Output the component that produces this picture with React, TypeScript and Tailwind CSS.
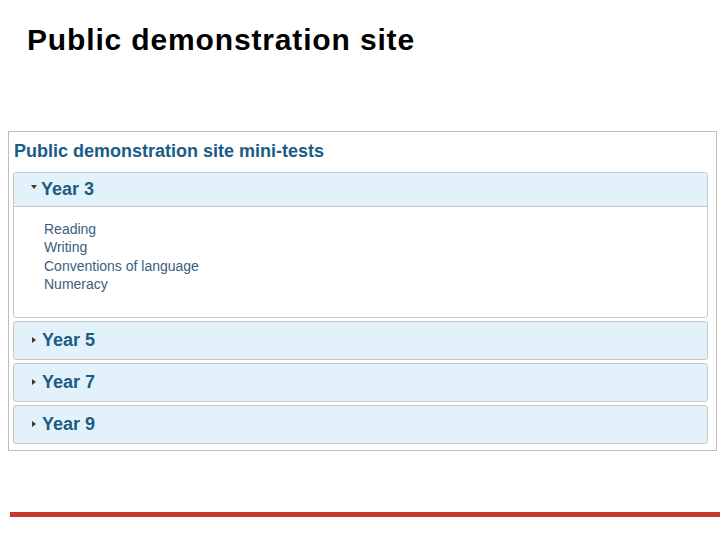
export default function App() {
  const closed = ["Year 5", "Year 7", "Year 9"];
  const tests = ["Reading", "Writing", "Conventions of language", "Numeracy"];

  return (
    <div className="w-[720px] h-[540px] bg-white relative overflow-hidden font-['Liberation_Sans',Arial,sans-serif]">
      <h1 className="pl-[27px] pt-[23px] text-[30px] leading-[34px] font-bold text-black tracking-[0.85px]">
        Public demonstration site
      </h1>

      <div className="ml-[8px] mt-[74px] w-[709px] h-[320px] border border-[#bdbdbd] pt-[9px] pl-[4px] pr-[8px]">
        <h2 className="pl-[1px] text-[18px] leading-[20px] font-bold text-[#1b5c86]">
          Public demonstration site mini-tests
        </h2>

        <div className="mt-[11px] flex flex-col gap-[3px]">
          <div className="rounded-[3px] border border-[#c8c8c8]">
            <div className="h-[34px] bg-[#e3f2fa] border-b border-[#c8c8c8] rounded-t-[3px] flex items-center pl-[17px]">
              <span className="w-0 h-0 border-l-[3.5px] border-r-[3.5px] border-t-[4px] border-l-transparent border-r-transparent border-t-[#3a3a3a] mr-[4px] -mt-[6px]" />
              <span className="text-[18px] font-bold text-[#1b5c86]">Year 3</span>
            </div>
            <ul className="h-[110px] pl-[30px] pt-[13px] text-[14px] leading-[18.3px] text-[#3b5e7e]">
              {tests.map((t) => (
                <li key={t}>{t}</li>
              ))}
            </ul>
          </div>

          {closed.map((y) => (
            <div
              key={y}
              className="h-[39px] rounded-[3px] border border-[#c8c8c8] bg-[#e3f2fa] flex items-center pl-[18px]"
            >
              <span className="w-0 h-0 border-t-[3.5px] border-b-[3.5px] border-l-[4px] border-t-transparent border-b-transparent border-l-[#3a3a3a] mr-[6px] -mt-[2px]" />
              <span className="text-[18px] font-bold text-[#1b5c86]">{y}</span>
            </div>
          ))}
        </div>
      </div>

      <div className="ml-[10px] mt-[61px] h-[5px] bg-[#c8372c]" />
    </div>
  );
}
